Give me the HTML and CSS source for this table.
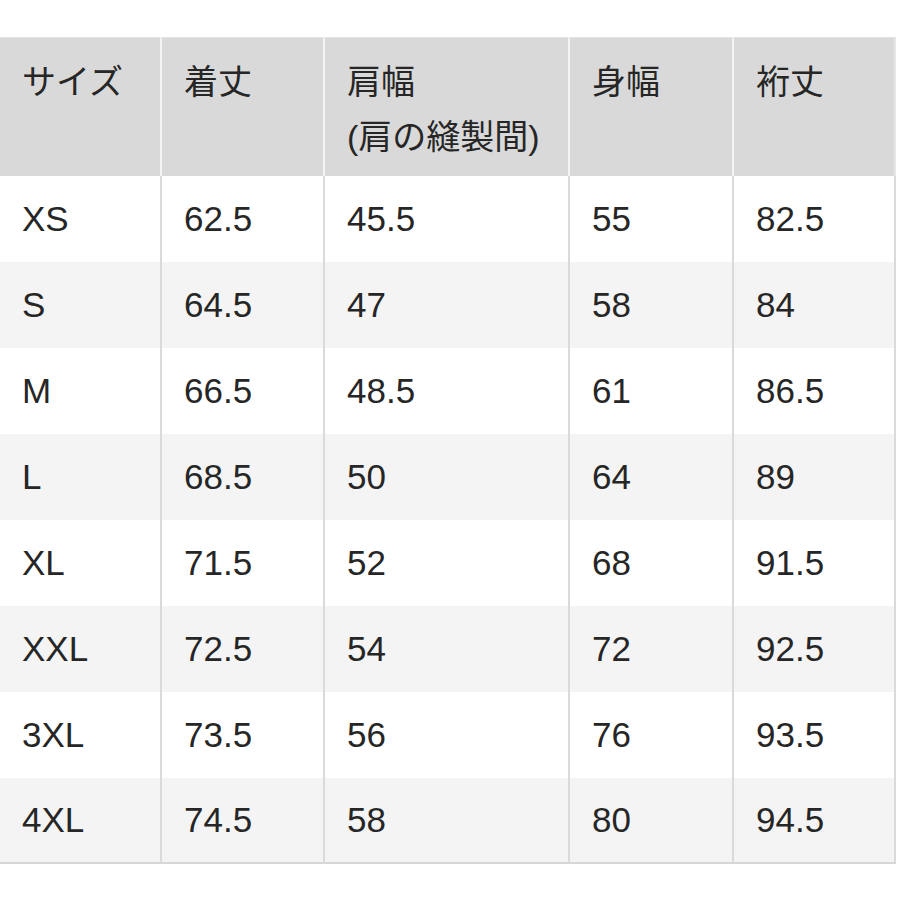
FILE: index.html
```html
<!DOCTYPE html>
<html lang="ja">
<head>
<meta charset="utf-8">
<link rel="stylesheet" href="styles.css">
</head>
<body>
<table class="size-table">
  <colgroup>
    <col class="c1"><col class="c2"><col class="c3"><col class="c4"><col class="c5">
  </colgroup>
  <thead>
    <tr>
      <th>サイズ</th>
      <th>着丈</th>
      <th>肩幅<br>(肩の縫製間)</th>
      <th>身幅</th>
      <th>裄丈</th>
    </tr>
  </thead>
  <tbody>
    <tr><td>XS</td><td>62.5</td><td>45.5</td><td>55</td><td>82.5</td></tr>
    <tr class="alt"><td>S</td><td>64.5</td><td>47</td><td>58</td><td>84</td></tr>
    <tr><td>M</td><td>66.5</td><td>48.5</td><td>61</td><td>86.5</td></tr>
    <tr class="alt"><td>L</td><td>68.5</td><td>50</td><td>64</td><td>89</td></tr>
    <tr><td>XL</td><td>71.5</td><td>52</td><td>68</td><td>91.5</td></tr>
    <tr class="alt"><td>XXL</td><td>72.5</td><td>54</td><td>72</td><td>92.5</td></tr>
    <tr><td>3XL</td><td>73.5</td><td>56</td><td>76</td><td>93.5</td></tr>
    <tr class="alt"><td>4XL</td><td>74.5</td><td>58</td><td>80</td><td>94.5</td></tr>
  </tbody>
</table>
</body>
</html>
```

FILE: styles.css
```css
html, body {
  margin: 0;
  padding: 0;
  background: #ffffff;
}

body {
  padding-top: 37px;
  font-family: "Liberation Sans", "Noto Sans CJK JP", sans-serif;
  color: #262626;
}

.size-table {
  border-collapse: separate;
  border-spacing: 0;
  table-layout: fixed;
  width: 896px;
  font-size: 34px;
}

.c1 { width: 162px; }
.c2 { width: 163px; }
.c3 { width: 245px; }
.c4 { width: 164px; }
.c5 { width: 162px; }

.size-table th {
  background: #d9d9d9;
  height: 139px;
  box-sizing: border-box;
  padding: 17px 0 0 22px;
  vertical-align: top;
  text-align: left;
  font-weight: 400;
  line-height: 55px;
  border-right: 2px solid #f4f4f4;
  border-top: 1px solid #e4e4e4;
}

.size-table th:last-child {
  border-right: 2px solid #e6e6e6;
}

.size-table td {
  height: 86px;
  box-sizing: border-box;
  padding: 0 0 0 22px;
  vertical-align: middle;
  text-align: left;
  font-size: 35px;
  line-height: 40px;
  border-right: 2px solid #dadada;
}

.size-table tr.alt td {
  background: #f4f4f4;
}

.size-table tbody tr:last-child td {
  border-bottom: 2px solid #d6d6d6;
}
```
